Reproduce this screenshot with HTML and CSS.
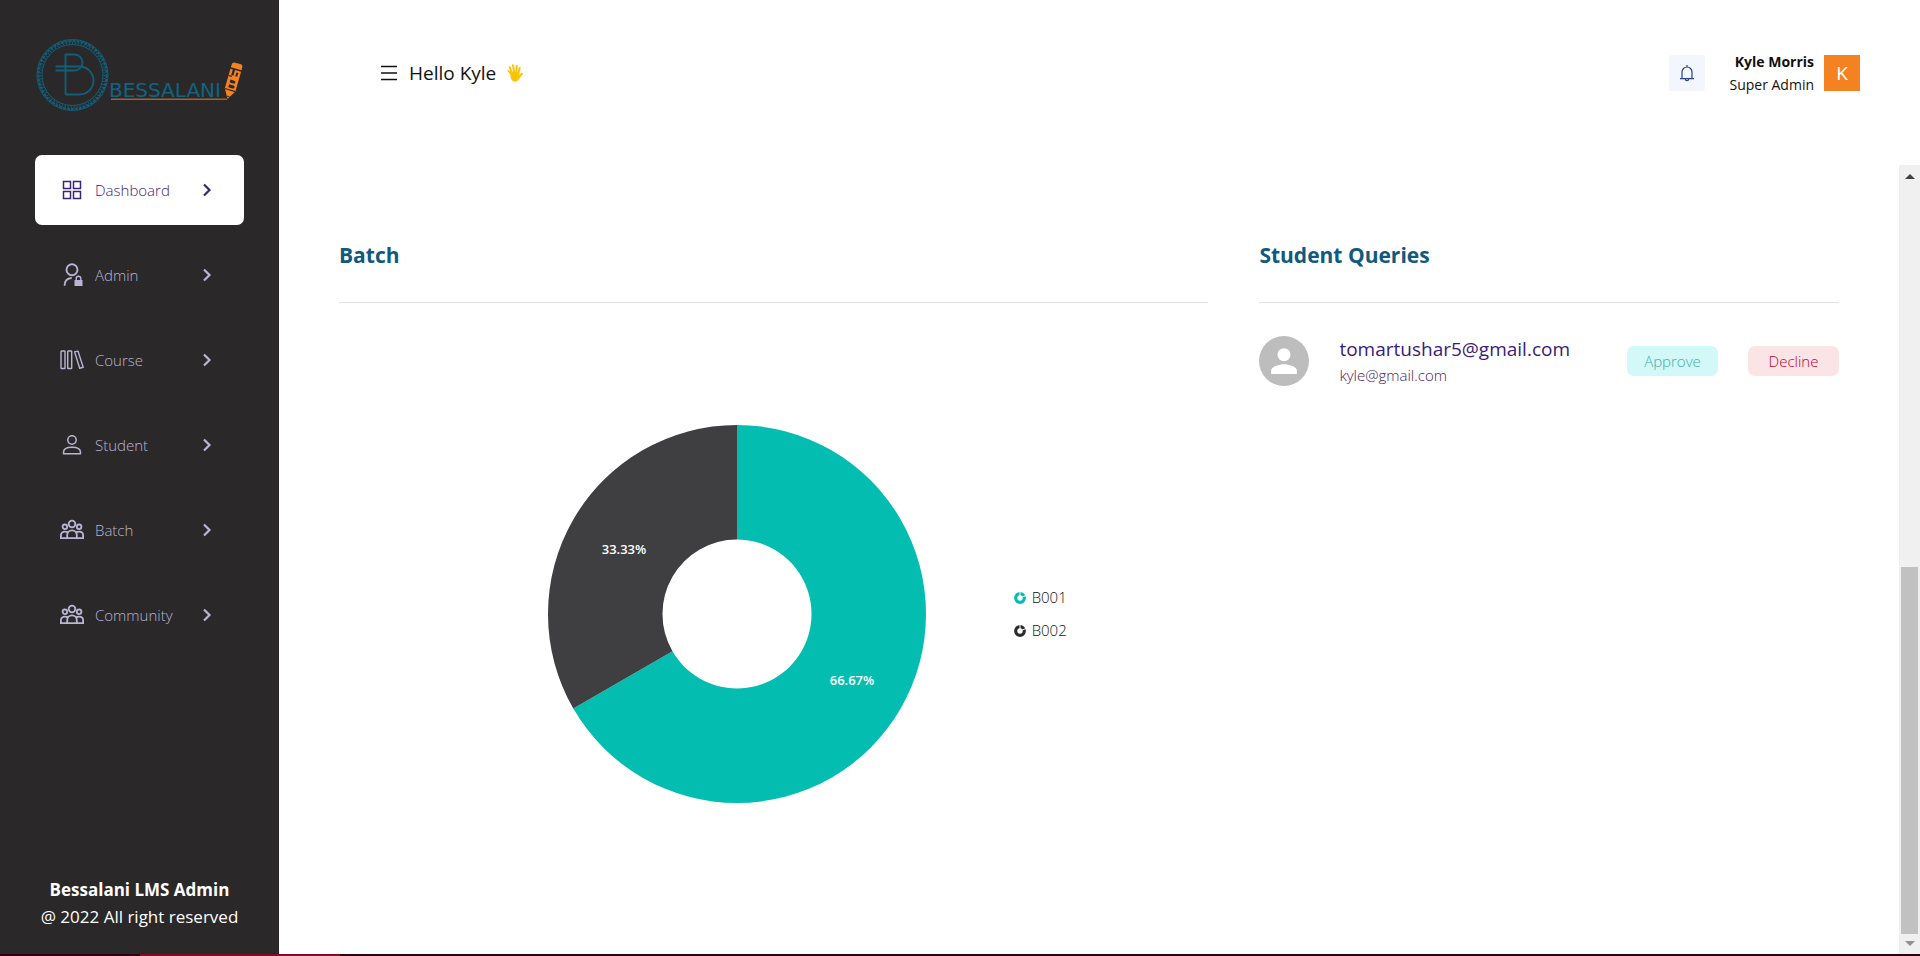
FILE: index.html
```html
<!DOCTYPE html>
<html lang="en">
<head>
<meta charset="utf-8">
<title>Bessalani LMS Admin</title>
<link rel="stylesheet" href="styles.css">
</head>
<body>
<svg class="defs" aria-hidden="true">
  <symbol id="chevron" viewBox="0 0 16 16"><path d="M5 2.500l5.500 5.500L5 13.500" fill="none" stroke="currentColor" stroke-width="2.200"/></symbol>
  <symbol id="people" viewBox="0 0 24 24"><g fill="none" stroke="currentColor" stroke-width="1.800">
    <circle cx="12" cy="6" r="3.300"/><circle cx="4.900" cy="8.800" r="2.300"/><circle cx="19.100" cy="8.800" r="2.300"/>
    <path d="M7.200 20.300v-3.200a4.800 4.800 0 0 1 9.600 0v3.200M7.800 14.600c-.8-.7-1.800-1-3-1-2.200 0-3.900 1.500-3.900 3.700v2.900h22.200v-2.900c0-2.200-1.700-3.700-3.900-3.700-1.200 0-2.200.3-3 1"/></g></symbol>
</svg>
<div class="app">
  <aside class="sidebar">
    <a class="logo" href="#" aria-label="Bessalani">
      <svg viewBox="0 0 209 76" role="img" aria-label="Bessalani logo">
        <g fill="none" stroke="#10607d">
          <circle cx="37.500" cy="38" r="35.500" stroke-width="1"/>
          <circle cx="37.500" cy="38" r="30.500" stroke-width="1"/>
          <circle cx="37.500" cy="38" r="34" stroke-width="2" stroke-dasharray="3 1"/>
          <circle cx="37.500" cy="38" r="32" stroke-width="2" stroke-dasharray="1 2"/>
          <path d="M30.500 57.500V17.500h9a8 8 0 0 1 8 8c0 4-3 8-8 8H20.500M20.500 29.500h24a14 14 0 0 1 0 28H30.500" stroke-width="1.800"/>
        </g>
        <text class="logo-word" x="74" y="60">BESSALANI</text>
        <path d="M76 62.200h116" stroke="#a8602a" stroke-width="1.400"/>
        <g transform="translate(192.500 62) rotate(16)">
          <path d="M0 0l-5.500-9.500V-30h11v20.500z" fill="#f58220"/>
          <path d="M-5.500-31.500v-2.500a3 3 0 0 1 3-3h5a3 3 0 0 1 3 3v2.500z" fill="#f58220"/>
          <path d="M-3-30.500h2.200v6.500h-2.200zM1.200-28h2v4h-2zM-5.500-23.500h3.500v1.200h-3.500zM-2.500-19.500h4a1 1 0 0 1 0 3h-4zM-2.500-14.500h4.500a1 1 0 0 1 0 3h-4.500zM-5.500-9.800h11v1.100h-11z" fill="#2a2829"/>
          <path d="M-1.500-2.600h3" stroke="#2a2829" stroke-width=".8"/>
        </g>
      </svg>
    </a>
    <nav class="nav">
      <a class="nav-item active" href="#">
        <svg class="nav-icon" viewBox="0 0 24 24"><path d="M3.500 3.500h7v7h-7zM13.500 3.500h7v7h-7zM3.500 13.500h7v7h-7zM13.500 13.500h7v7h-7z" fill="none" stroke="currentColor" stroke-width="1.500"/></svg>
        <span>Dashboard</span><svg class="chevron"><use href="#chevron"/></svg></a>
      <a class="nav-item" href="#">
        <svg class="nav-icon" viewBox="0 0 24 24"><circle cx="12" cy="6.700" r="5.500" fill="none" stroke="currentColor" stroke-width="1.900"/><path d="M4.600 22.700c0-4.500 2.600-7.400 7.200-7.800" fill="none" stroke="currentColor" stroke-width="1.900"/><path d="M14.500 17h1v-1.400a3 3 0 0 1 6 0V17h1v6h-8zM16.900 17h3.200v-1.400a1.600 1.600 0 0 0-3.200 0z" fill="currentColor" fill-rule="evenodd"/></svg>
        <span>Admin</span><svg class="chevron"><use href="#chevron"/></svg></a>
      <a class="nav-item" href="#">
        <svg class="nav-icon" viewBox="0 0 24 24"><g fill="none" stroke="currentColor" stroke-width="1.400"><rect x="1" y="3" width="4" height="17.500" rx=".6"/><rect x="7.700" y="3" width="4" height="17.500" rx=".6"/><path d="M14.600 3.900l3.400-.8 5.200 16.200-3.500.9z" stroke-linejoin="round"/></g></svg>
        <span>Course</span><svg class="chevron"><use href="#chevron"/></svg></a>
      <a class="nav-item" href="#">
        <svg class="nav-icon" viewBox="0 0 24 24"><g fill="none" stroke="currentColor" stroke-width="1.500"><circle cx="12" cy="7" r="4.200"/><path d="M3.500 20.700v-1.200c0-3.200 2.800-5.200 8.500-5.200s8.500 2 8.500 5.200v1.200z" stroke-linejoin="round"/></g></svg>
        <span>Student</span><svg class="chevron"><use href="#chevron"/></svg></a>
      <a class="nav-item" href="#">
        <svg class="nav-icon"><use href="#people"/></svg>
        <span>Batch</span><svg class="chevron"><use href="#chevron"/></svg></a>
      <a class="nav-item" href="#">
        <svg class="nav-icon"><use href="#people"/></svg>
        <span>Community</span><svg class="chevron"><use href="#chevron"/></svg></a>
    </nav>
    <footer class="sidebar-footer"><strong>Bessalani LMS Admin</strong><span>@ 2022 All right reserved</span></footer>
  </aside>

  <div class="page">
    <header class="topbar">
      <div class="greeting">
        <button class="menu-button" type="button" aria-label="Toggle menu"><svg viewBox="0 0 16 16"><path d="M0 1.500h16M0 8h16M0 14.500h16" stroke="currentColor" stroke-width="1.500"/></svg></button>
        <span class="hello">Hello Kyle</span>
        <svg class="hand" viewBox="0 0 16 18" aria-hidden="true"><g stroke="#fcc404" stroke-linecap="round" fill="none"><path d="M5 10L2.800 3.200M7.200 9L6 1.300M9.300 9l.4-7.300M11.200 10l1.500-6M11.800 13.500l3.100-3.800" stroke-width="2"/><path d="M5 11L1.200 6.800" stroke-width="1.700"/></g><path d="M3.300 8.500c2-1.200 6.500-1.400 8.700 0l1 3.500c-.8 3.500-2.300 5.700-4.800 5.700-2.800 0-4.200-2.200-4.700-5z" fill="#fcc404"/></svg>
      </div>
      <div class="account">
        <button class="bell" type="button" aria-label="Notifications"><svg viewBox="0 0 16 18"><g fill="none" stroke="currentColor" stroke-width="1.200"><path d="M3 14.500V8a5 5 0 0 1 10 0v6.500M1 14.600h14M8 3V1M6.300 15c0 1 .7 1.700 1.700 1.700s1.700-.7 1.700-1.700"/></g></svg></button>
        <div class="who"><strong>Kyle Morris</strong><span>Super Admin</span></div>
        <div class="initial">K</div>
      </div>
    </header>

    <div class="scroll-area">
      <main class="content">
        <section class="panel">
          <h2>Batch</h2>
          <div class="chart">
            <svg class="donut" viewBox="0 0 378 378" role="img" aria-label="Students by batch">
              <path d="M189 0A189 189 0 1 1 25.320 283.500L124.480 226.250A74.500 74.500 0 1 0 189 114.500Z" fill="#03beb0"/>
              <path d="M25.320 283.500A189 189 0 0 1 189 0V114.500A74.500 74.500 0 0 0 124.480 226.250Z" fill="#3f3f42"/>
              <text x="76" y="129">33.33%</text>
              <text x="304" y="260">66.67%</text>
            </svg>
            <ul class="legend">
              <li class="teal"><svg viewBox="0 0 12 12"><circle cx="6" cy="6" r="4.300" fill="none" stroke="currentColor" stroke-width="3.200"/><path d="M6 6V-1M6 6l7-3" stroke="#fff" stroke-width="1"/></svg>B001</li>
              <li class="dark"><svg viewBox="0 0 12 12"><circle cx="6" cy="6" r="4.300" fill="none" stroke="currentColor" stroke-width="3.200"/><path d="M6 6V-1M6 6l7-3" stroke="#fff" stroke-width="1"/></svg>B002</li>
            </ul>
          </div>
        </section>
        <section class="panel">
          <h2>Student Queries</h2>
          <div class="query">
            <svg class="avatar" viewBox="0 0 50 50" aria-hidden="true"><circle cx="25" cy="25" r="25" fill="#bdbdbd"/><circle cx="25" cy="18.700" r="6.500" fill="#fff"/><path d="M12 38v-3.300c0-4.300 8.700-6.500 13-6.500s13 2.200 13 6.500V38z" fill="#fff"/></svg>
            <div class="query-text"><a class="query-title" href="#">tomartushar5@gmail.com</a><span class="query-from">kyle@gmail.com</span></div>
            <div class="actions"><button class="approve" type="button">Approve</button><button class="decline" type="button">Decline</button></div>
          </div>
        </section>
      </main>
      <div class="scrollbar" aria-hidden="true"><i class="arrow up"></i><div class="track"><div class="thumb"></div></div><i class="arrow down"></i></div>
    </div>
  </div>
</div>
<div class="edge" aria-hidden="true"><span></span></div>
</body>
</html>
```

FILE: styles.css
```css
* { box-sizing: border-box; }
body {
  margin: 0;
  height: 100vh;
  display: flex;
  flex-direction: column;
  font-family: "Open Sans", "Noto Sans", sans-serif;
  font-size: 15px;
  color: #111;
  background: #fff;
}
.defs { position: absolute; width: 0; height: 0; }
svg { display: block; flex: none; }
button { padding: 0; border: 0; background: none; font: inherit; color: inherit; cursor: pointer; }
a { color: inherit; text-decoration: none; }

.app { flex: 1; display: flex; min-height: 0; }
.sidebar {
  width: 279px;
  flex: none;
  display: flex;
  flex-direction: column;
  padding: 37px 35px 24px;
  background: #2a2829;
}
.logo svg { width: 209px; height: 76px; }
.logo-word { font-family: "DejaVu Sans", sans-serif; font-size: 20px; fill: #0f6482; }
.nav { display: flex; flex-direction: column; gap: 15px; margin-top: 42px; }
.nav-item {
  display: flex;
  align-items: center;
  gap: 11px;
  height: 70px;
  padding: 0 29px 0 25px;
  border-radius: 7px;
  font-size: 15px;
  font-weight: 300;
  color: #b9b5d4;
}
.nav-item.active { background: #fff; color: #3b2578; }
.nav-icon { width: 24px; height: 24px; }
.chevron { width: 16px; height: 16px; margin-left: auto; }
.sidebar-footer {
  display: flex;
  flex-direction: column;
  margin-top: auto;
  text-align: center;
  color: #fff;
  font-size: 17px;
  line-height: 27px;
  white-space: nowrap;
}

.page { flex: 1; display: flex; flex-direction: column; min-width: 0; }
.topbar {
  height: 165px;
  flex: none;
  display: flex;
  justify-content: space-between;
  align-items: flex-start;
  padding: 49px 60px 0 102px;
}
.greeting { display: flex; align-items: center; height: 48px; font-size: 19px; }
.menu-button svg { width: 16px; height: 16px; }
.hello { margin: 0 11px 0 12px; }
.hand { width: 16px; height: 18px; }
.account { display: flex; align-items: center; height: 48px; }
.bell {
  display: grid;
  place-items: center;
  width: 36px;
  height: 36px;
  margin-right: 24px;
  background: #f3f6ff;
  color: #26418f;
}
.bell svg { width: 16px; height: 18px; }
.who { display: flex; flex-direction: column; text-align: right; line-height: 23px; font-size: 14px; }
.initial {
  display: grid;
  place-items: center;
  width: 36px;
  height: 36px;
  margin-left: 10px;
  background: #f58220;
  color: #fff;
  font-size: 19px;
}

.scroll-area { flex: 1; display: flex; min-height: 0; }
.content {
  flex: 1;
  display: grid;
  grid-template-columns: 3fr 2fr;
  align-items: start;
  gap: 51px;
  padding: 72px 60px 0;
}
.panel { min-width: 0; }
.panel h2 {
  margin: 0;
  padding-bottom: 29px;
  border-bottom: 1px solid #e2e2e2;
  font-size: 21px;
  line-height: 36px;
  color: #0f5a7e;
}
.chart { display: flex; align-items: center; margin-top: 122px; padding-left: 24%; }
.donut { width: 378px; height: 378px; }
.donut text { fill: #fff; font-size: 13px; font-weight: 600; text-anchor: middle; }
.legend { display: flex; flex-direction: column; gap: 12px; margin: 0 0 0 88px; padding: 0; list-style: none; }
.legend li { display: flex; align-items: center; gap: 6px; line-height: 21px; color: #111; font-weight: 300; }
.legend svg { width: 12px; height: 12px; }
.teal svg { color: #03beb0; }
.dark svg { color: #2b2b2e; }

.query { display: flex; align-items: center; margin-top: 30px; }
.avatar { width: 50px; height: 50px; }
.query-text { display: flex; flex-direction: column; margin-left: 30px; padding-top: 3px; line-height: 26px; }
.query-title { font-size: 19px; color: #3b1a7a; }
.query-from { font-size: 15px; font-weight: 300; color: #4c2062; }
.actions { display: flex; gap: 30px; margin-left: auto; }
.actions button { width: 91px; height: 30px; border-radius: 7px; font-size: 15px; font-weight: 300; }
.actions .approve { background: #d2f8f8; color: #3fb0a8; }
.actions .decline { background: #fbe4e6; color: #c00030; }

.scrollbar {
  width: 21px;
  flex: none;
  display: flex;
  flex-direction: column;
  align-items: center;
  padding: 9px 0 8px;
  background: #f0f0f0;
}
.arrow { width: 0; height: 0; border: 5px solid transparent; }
.arrow.up { border-top: 0; border-bottom-color: #404040; }
.arrow.down { border-bottom: 0; border-top-color: #909090; }
.track { flex: 1; display: flex; align-items: flex-end; margin: 7px 0; }
.thumb { width: 17px; height: 49%; background: #c1c1c1; }

.edge { height: 2px; flex: none; padding-left: 140px; background: #2f0010; }
.edge span { display: block; width: 200px; height: 2px; background: #85091f; }
```
